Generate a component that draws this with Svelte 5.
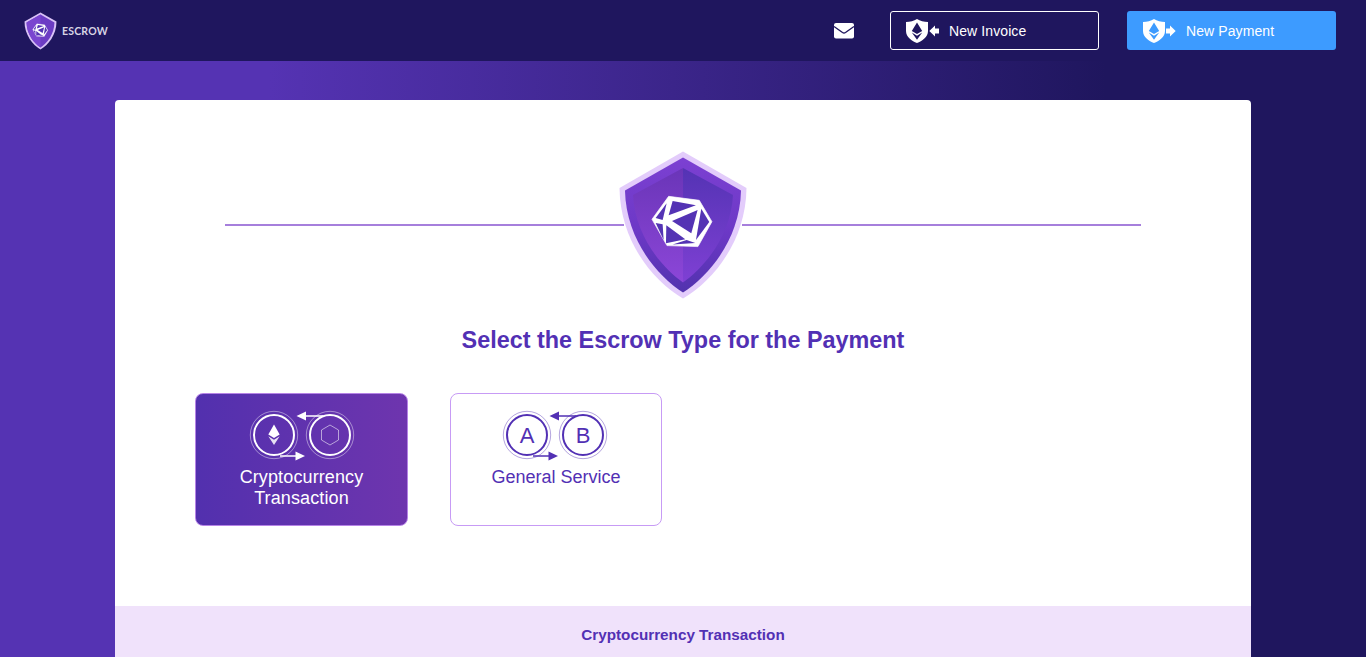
<script>
  const facets = [
    '80,33 150,46 68,76',
    '62,40 29,84 50,90',
    '78,93 155,60 136,130',
    '166,56 190,96 150,150',
    '61,106 60,160 118,148',
    '80,164 148,159 122,150',
    '29,99 50,103 53,150'
  ];
  const outline = '68,19 160,31 198,95 156,170 63,167 18,88';
</script>

{#snippet poly()}
  <polygon points={outline} fill="#fff" stroke="#fff" stroke-width="2" stroke-linejoin="round" />
  {#each facets as f}
    <polygon points={f} fill="#5433b4" />
  {/each}
{/snippet}

{#snippet miniShield()}
  <path d="M0 3C4 3 8 2 11 0C14 2 18 3 22 3V12C22 18 16 22 11 24C6 22 0 18 0 12Z" fill="#fff" />
{/snippet}

{#snippet rings(stroke)}
  <circle cx="32" cy="30" r="23.7" fill="none" {stroke} stroke-width=".8" opacity=".55" />
  <circle cx="32" cy="30" r="20" fill="none" {stroke} stroke-width="2" />
  <circle cx="88" cy="30" r="23.7" fill="none" {stroke} stroke-width=".8" opacity=".55" />
  <circle cx="88" cy="30" r="20" fill="none" {stroke} stroke-width="2" />
  <path d="M60 11H81M38 51H56" fill="none" {stroke} stroke-width="1.6" />
  <path d="M54.5 11L64 6.5V15.5ZM63 51L53.5 46.5V55.5Z" fill={stroke} />
{/snippet}

<div class="page">
  <header>
    <div class="logo">
      <svg width="33" height="38" viewBox="0 0 130 148" aria-hidden="true">
        <path d="M65 1L128 37C128 90 95 130 65 147C35 130 2 90 2 37Z" fill="#d9c2f7" />
        <path d="M65 9L120 41C119 88 90 124 65 139C40 124 11 88 10 41Z" fill="#6c3cc4" />
        <path d="M65 9V139C40 124 11 88 10 41Z" fill="#7a45d0" />
        <g transform="translate(28 39) scale(.333)">{@render poly()}</g>
      </svg>
      <span>ESCROW</span>
    </div>
    <nav>
      <svg class="mail" width="20" height="16" viewBox="0 0 20 16" aria-hidden="true">
        <rect width="20" height="15.5" rx="2" fill="#fff" />
        <path d="M0 3.5L8.5 9.5Q10 10.5 11.5 9.5L20 3.5" fill="none" stroke="#1f165e" stroke-width="1.4" />
      </svg>
      <button class="outline">
        <svg width="34" height="24" viewBox="0 0 34 24" aria-hidden="true">
          {@render miniShield()}
          <path d="M11 3.5L5.8 12L11 15L16.2 12ZM5.8 13.6L11 20.8L16.2 13.6L11 16.7Z" fill="#1f165e" />
          <path d="M23.3 12L29 6.5V9.5H33V14.5H29V17.5Z" fill="#fff" />
        </svg>
        New Invoice
      </button>
      <button class="solid">
        <svg width="34" height="24" viewBox="0 0 34 24" aria-hidden="true">
          {@render miniShield()}
          <path d="M11 3.5L5.8 12L11 15L16.2 12ZM5.8 13.6L11 20.8L16.2 13.6L11 16.7Z" fill="#3d9bff" />
          <path d="M32.7 12L27 6.5V9.5H23V14.5H27V17.5Z" fill="#fff" />
        </svg>
        New Payment
      </button>
    </nav>
  </header>

  <main>
    <div class="hero">
      <div class="rule"></div>
      <svg width="130" height="148" viewBox="0 0 130 148" aria-hidden="true">
        <defs>
          <linearGradient id="band" x1="0" y1="0" x2="0" y2="1">
            <stop offset="0" stop-color="#7c40d2" />
            <stop offset=".55" stop-color="#6c38c6" />
            <stop offset="1" stop-color="#5232ae" />
          </linearGradient>
          <linearGradient id="il" x1="0" y1="0" x2="0" y2="1">
            <stop offset="0" stop-color="#6a35b8" />
            <stop offset="1" stop-color="#8c46d8" />
          </linearGradient>
          <linearGradient id="ir" x1="0" y1="0" x2="0" y2="1">
            <stop offset="0" stop-color="#5433b4" />
            <stop offset="1" stop-color="#7f40d4" />
          </linearGradient>
        </defs>
        <path d="M65 .5L128.5 37C128 90 95 130 65 147.5C35 130 2 90 1.5 37Z" fill="#e3ccfb" />
        <path d="M65 6.5L123 39.5C122 88 91 125 65 141.5C39 125 8 88 7 39.5Z" fill="url(#band)" />
        <path d="M65 17L115 44C113 84 87 116 65 131.5Z" fill="url(#ir)" />
        <path d="M65 17L15 44C17 84 43 116 65 131.5Z" fill="url(#il)" />
        <g transform="translate(28 39) scale(.333)">{@render poly()}</g>
      </svg>
      <div class="rule"></div>
    </div>

    <h1>Select the Escrow Type for the Payment</h1>

    <div class="types">
      <div class="type active">
        <svg width="120" height="60" viewBox="0 0 120 60" aria-hidden="true">
          {@render rings('#fff')}
          <path d="M32 19.5L26.3 29.5L32 33L37.7 29.5Z" fill="#fff" />
          <path d="M26.3 31.3L32 40L37.7 31.3L32 34.8Z" fill="#fff" opacity=".85" />
          <path d="M88 20L96.5 25V35L88 40L79.5 35V25Z" fill="none" stroke="#fff" stroke-width="1" opacity=".55" />
        </svg>
        <span>Cryptocurrency<br />Transaction</span>
      </div>
      <div class="type general">
        <svg width="120" height="60" viewBox="0 0 120 60" aria-hidden="true">
          {@render rings('#5230b4')}
          <text x="32" y="38" text-anchor="middle">A</text>
          <text x="88" y="38" text-anchor="middle">B</text>
        </svg>
        <span>General Service</span>
      </div>
    </div>

    <footer>Cryptocurrency Transaction</footer>
  </main>
</div>

<style>
  :global(body) {
    margin: 0;
    overflow: hidden;
  }
  .page {
    height: 657px;
    overflow: hidden;
    font-family: "Liberation Sans", Arial, sans-serif;
    background: linear-gradient(90deg, #5533b3 0, #5533b3 270px, #1f165e 1106px);
  }
  header {
    height: 61px;
    background: #1f165e;
    display: flex;
    align-items: center;
    justify-content: space-between;
    padding: 0 30px 0 24px;
  }
  .logo {
    display: flex;
    align-items: center;
    gap: 5px;
    color: #d8d4e4;
    font-family: Lato, sans-serif;
    font-weight: 700;
    font-size: 10.5px;
    letter-spacing: 0.2px;
  }
  nav {
    display: flex;
    align-items: center;
    gap: 28px;
  }
  .mail {
    margin-right: 8px;
  }
  button {
    width: 209px;
    height: 39px;
    box-sizing: border-box;
    display: flex;
    align-items: center;
    gap: 9px;
    padding: 0 0 0 16px;
    border-radius: 3px;
    color: #fff;
    font: 14px "Liberation Sans", Arial, sans-serif;
    letter-spacing: 0.1px;
  }
  .outline {
    background: transparent;
    border: 1px solid #fff;
    padding-left: 15px;
  }
  .solid {
    background: #3d9bff;
    border: 0;
  }
  main {
    width: 1136px;
    margin: 39px auto 0;
    padding-top: 51px;
    background: #fff;
    border-radius: 4px 4px 0 0;
  }
  .hero {
    width: 916px;
    margin: 0 auto;
    display: flex;
    align-items: center;
  }
  .hero svg {
    margin: 0 -6px;
    position: relative;
    z-index: 1;
  }
  .rule {
    flex: 1;
    height: 2px;
    background: #a67fdc;
  }
  h1 {
    margin: 27px 0 0;
    text-align: center;
    color: #5230b4;
    font-size: 23.4px;
    line-height: 28px;
    font-weight: 700;
  }
  .types {
    display: flex;
    gap: 42px;
    margin: 39px 0 80px 80px;
  }
  .type {
    width: 213px;
    height: 133px;
    box-sizing: border-box;
    padding-top: 11px;
    border: 1px solid #c79bf5;
    border-radius: 8px;
    display: flex;
    flex-direction: column;
    align-items: center;
    text-align: center;
    font-size: 18px;
    line-height: 21px;
    color: #5230b4;
  }
  .type svg {
    margin-bottom: 2px;
    flex: none;
  }
  .active {
    background: linear-gradient(90deg, #5230ae, #6e35ae);
    color: #fff;
    border-color: #b683e6;
    letter-spacing: 0.12px;
  }
  .general {
    width: 212px;
  }
  .general svg {
    margin-left: -3px;
  }
  .general text {
    font-size: 22px;
    fill: #5230b4;
  }
  footer {
    height: 51px;
    box-sizing: border-box;
    padding-top: 19px;
    background: #f0e2fb;
    color: #5230b4;
    text-align: center;
    font-size: 15.25px;
    line-height: 19px;
    font-weight: 700;
  }
</style>
